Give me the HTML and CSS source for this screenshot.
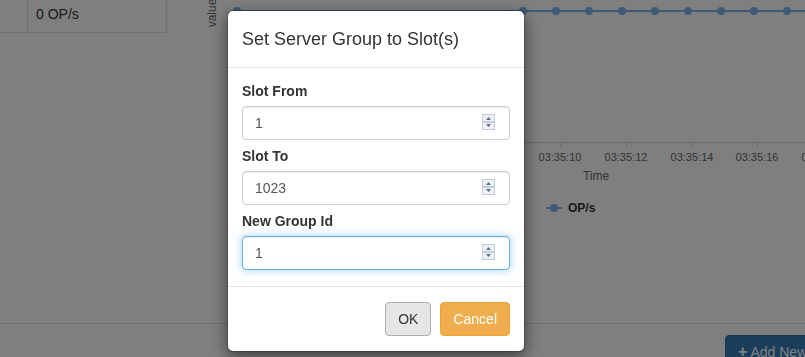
FILE: index.html
```html
<!DOCTYPE html>
<html lang="en">
  <head>
    <meta charset="UTF-8" />
    <meta name="viewport" content="width=device-width, initial-scale=1.0" />
    <title>Server Groups</title>
    <link rel="stylesheet" href="styles.css">
  </head>
  <body>
    <div class="page">
      <div class="top">
        <div class="stats">
          <table class="stats-table">
            <tr>
              <td class="cell-name"></td>
              <td class="cell-value">0 OP/s</td>
            </tr>
          </table>
        </div>
        <svg class="chart" width="625" height="300" viewBox="0 0 625 300">
          <text class="axis-title" x="32" y="18" transform="rotate(-90 32 18)" text-anchor="middle" dominant-baseline="central">value</text>
          <path class="series" d="M57 16 H625" />
          <g class="points">
            <circle cx="57" cy="16" r="4" />
            <circle cx="343" cy="16" r="4" />
            <circle cx="376" cy="16" r="4" />
            <circle cx="409" cy="16" r="4" />
            <circle cx="442" cy="16" r="4" />
            <circle cx="475" cy="16" r="4" />
            <circle cx="508" cy="16" r="4" />
            <circle cx="541" cy="16" r="4" />
            <circle cx="574" cy="16" r="4" />
            <circle cx="607" cy="16" r="4" />
          </g>
          <path class="x-axis" d="M57 147.5 H625" />
          <path class="x-axis" d="M380.5 147 V152 M446.5 147 V152 M512.5 147 V152 M577.5 147 V152" />
          <g class="tick-labels" text-anchor="middle">
            <text x="380" y="166">03:35:10</text>
            <text x="446" y="166">03:35:12</text>
            <text x="512" y="166">03:35:14</text>
            <text x="577" y="166">03:35:16</text>
            <text x="643" y="166">03:35:18</text>
          </g>
          <text class="axis-title" x="416" y="185" text-anchor="middle">Time</text>
          <path class="series" d="M366 213 H382" />
          <circle class="legend-dot" cx="374" cy="213" r="4" />
          <text class="legend-text" x="388" y="217">OP/s</text>
        </svg>
      </div>
      <div class="toolbar">
        <button type="button" class="btn btn-primary">
          <span class="plus">+</span> Add New Server Group
        </button>
      </div>
    </div>

    <div class="backdrop"></div>

    <div class="modal-wrap">
      <div class="modal">
        <div class="modal-header">
          <h4>Set Server Group to Slot(s)</h4>
        </div>
        <div class="modal-body">
          <div class="form-group">
            <label for="slotFrom">Slot From</label>
            <div class="spin-wrap">
              <input type="text" id="slotFrom" class="form-control" value="1" />
              <svg class="spin" width="13" height="16" viewBox="0 0 13 16">
                <rect x="0.5" y="0.5" width="12" height="7" fill="#eef1f6" stroke="#c3ccd9" />
                <rect x="0.5" y="8.5" width="12" height="7" fill="#eef1f6" stroke="#c3ccd9" />
                <path d="M4 6 L6.5 3 L9 6 Z M4 10 L6.5 13 L9 10 Z" fill="#5d6f8a" />
              </svg>
            </div>
          </div>
          <div class="form-group">
            <label for="slotTo">Slot To</label>
            <div class="spin-wrap">
              <input type="text" id="slotTo" class="form-control" value="1023" />
              <svg class="spin" width="13" height="16" viewBox="0 0 13 16">
                <rect x="0.5" y="0.5" width="12" height="7" fill="#eef1f6" stroke="#c3ccd9" />
                <rect x="0.5" y="8.5" width="12" height="7" fill="#eef1f6" stroke="#c3ccd9" />
                <path d="M4 6 L6.5 3 L9 6 Z M4 10 L6.5 13 L9 10 Z" fill="#5d6f8a" />
              </svg>
            </div>
          </div>
          <div class="form-group">
            <label for="groupId">New Group Id</label>
            <div class="spin-wrap">
              <input type="text" id="groupId" class="form-control focused" value="1" />
              <svg class="spin" width="13" height="16" viewBox="0 0 13 16">
                <rect x="0.5" y="0.5" width="12" height="7" fill="#eef1f6" stroke="#c3ccd9" />
                <rect x="0.5" y="8.5" width="12" height="7" fill="#eef1f6" stroke="#c3ccd9" />
                <path d="M4 6 L6.5 3 L9 6 Z M4 10 L6.5 13 L9 10 Z" fill="#5d6f8a" />
              </svg>
            </div>
          </div>
        </div>
        <div class="modal-footer">
          <button type="button" class="btn btn-default">OK</button>
          <button type="button" class="btn btn-warning">Cancel</button>
        </div>
      </div>
    </div>
  </body>
</html>
```

FILE: styles.css
```css
* {
  margin: 0;
  padding: 0;
  box-sizing: border-box;
}
body {
  font-family: "Liberation Sans", Arial, sans-serif;
  font-size: 14px;
  line-height: 20px;
  color: #333;
  background-color: #fff;
  overflow: hidden;
}
.page {
  margin-top: -5px;
}
.top {
  display: flex;
  height: 329px;
  border-bottom: 1px solid #ddd;
}
.stats {
  width: 180px;
  flex-shrink: 0;
}
.stats-table {
  border-collapse: collapse;
  margin-left: -1px;
}
.stats-table td {
  border: 1px solid #ddd;
  padding: 8px;
  height: 37px;
}
.cell-name {
  width: 28px;
}
.cell-value {
  width: 139px;
}
.chart {
  display: block;
  flex-shrink: 0;
  overflow: visible;
}
.chart text {
  font-family: "Liberation Sans", Arial, sans-serif;
}
.axis-title {
  font-size: 12px;
  fill: #666;
}
.series {
  stroke: #7cb5ec;
  stroke-width: 2;
  fill: none;
}
.points circle,
.legend-dot {
  fill: #7cb5ec;
}
.x-axis {
  stroke: #ccd6eb;
  stroke-width: 1;
  fill: none;
}
.tick-labels {
  font-size: 11px;
  fill: #666;
}
.legend-text {
  font-size: 12px;
  font-weight: bold;
  fill: #333;
}
.toolbar {
  padding: 11px 0 0 725px;
  white-space: nowrap;
}
.btn {
  display: inline-block;
  font-family: inherit;
  font-size: 14px;
  line-height: 20px;
  padding: 6px 12px;
  border: 1px solid transparent;
  border-radius: 4px;
  cursor: pointer;
  white-space: nowrap;
}
.btn-primary {
  color: #fff;
  background-color: #337ab7;
  border-color: #2e6da4;
}
.plus {
  font-weight: bold;
  font-size: 16px;
}
.btn-default {
  color: #333;
  background-color: #e6e6e6;
  border-color: #adadad;
}
.btn-warning {
  color: #fff;
  background-color: #f0ad4e;
  border-color: #eea236;
}
.backdrop {
  position: fixed;
  top: 0;
  left: 0;
  right: 0;
  bottom: 0;
  background-color: rgba(0, 0, 0, 0.5);
}
.modal-wrap {
  position: fixed;
  top: 0;
  left: 0;
  right: 0;
  bottom: 0;
  padding: 10px 0 0 227px;
}
.modal {
  width: 298px;
  background-color: #fff;
  border: 1px solid rgba(0, 0, 0, 0.2);
  border-radius: 6px;
  box-shadow: 0 5px 15px rgba(0, 0, 0, 0.5);
  background-clip: padding-box;
}
.modal-header {
  padding: 15px 14px;
  border-bottom: 1px solid #e5e5e5;
}
.modal-header h4 {
  font-size: 18px;
  font-weight: normal;
  line-height: 26px;
  color: #333;
}
.modal-body {
  padding: 13px 14px 16px;
}
.form-group {
  margin-bottom: 6px;
}
.form-group:last-child {
  margin-bottom: 0;
}
.form-group label {
  display: block;
  font-weight: bold;
  margin-bottom: 5px;
}
.spin-wrap {
  position: relative;
}
.form-control {
  display: block;
  width: 100%;
  height: 34px;
  padding: 6px 12px;
  font-family: inherit;
  font-size: 14px;
  color: #555;
  background-color: #fff;
  border: 1px solid #ccc;
  border-radius: 4px;
  box-shadow: inset 0 1px 1px rgba(0, 0, 0, 0.075);
  outline: none;
}
.form-control.focused {
  border-color: #66afe9;
  box-shadow: inset 0 1px 1px rgba(0, 0, 0, 0.075), 0 0 8px rgba(102, 175, 233, 0.6);
}
.spin {
  position: absolute;
  right: 15px;
  top: 8px;
}
.modal-footer {
  display: flex;
  justify-content: flex-end;
  gap: 9px;
  padding: 15px 14px;
  border-top: 1px solid #e5e5e5;
}
```
